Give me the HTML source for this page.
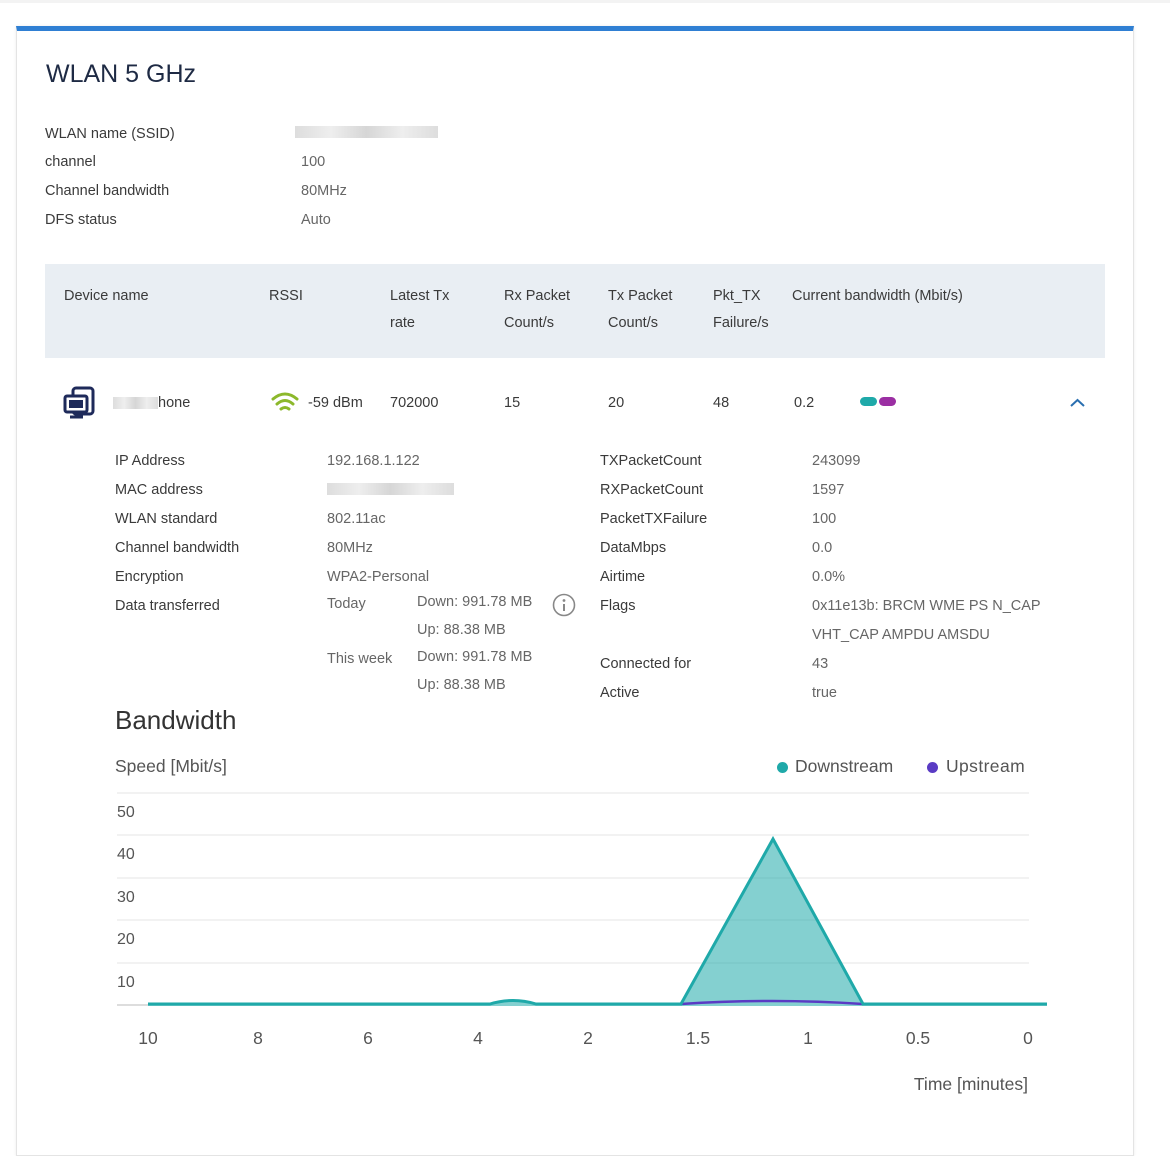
<!DOCTYPE html>
<html><head><meta charset="utf-8"><style>
*{margin:0;padding:0;box-sizing:border-box}
body{width:1170px;height:1124px;background:#fff;font-family:"Liberation Sans",sans-serif;color:#333;position:relative;overflow:hidden}
.a{position:absolute;white-space:nowrap}
.card{position:absolute;left:16px;top:26px;width:1118px;height:1130px;border:1px solid #e4e4e4;border-top:5px solid #2f7fd3;box-shadow:0 0 3px rgba(0,0,0,.08)}
.l{font-size:14.5px;color:#3a3a3a}
.v{font-size:14.5px;color:#666}
.blur{background:linear-gradient(90deg,#ddd,#eee,#d6d6d6,#eee,#ddd);height:12px}
</style></head><body>
<div class="a" style="left:0;top:0;width:1170px;height:3px;background:#f3f3f3"></div>
<div class="card"></div>
<div class="a" style="left:46px;top:60px;font-size:25px;color:#1e2a44">WLAN 5 GHz</div>
<div class="a l" style="left:45px;top:126px">WLAN name (SSID)</div>
<div class="a blur" style="left:295px;top:126px;width:143px"></div>
<div class="a l" style="left:45px;top:154px">channel</div><div class="a v" style="left:301px;top:154px">100</div>
<div class="a l" style="left:45px;top:183px">Channel bandwidth</div><div class="a v" style="left:301px;top:183px">80MHz</div>
<div class="a l" style="left:45px;top:212px">DFS status</div><div class="a v" style="left:301px;top:212px">Auto</div>

<div class="a" style="left:45px;top:264px;width:1060px;height:94px;background:#e9eef3"></div>
<div class="a l" style="left:64px;top:288px">Device name</div>
<div class="a l" style="left:269px;top:288px">RSSI</div>
<div class="a l" style="left:390px;top:283px;line-height:27px">Latest Tx<br>rate</div>
<div class="a l" style="left:504px;top:283px;line-height:27px">Rx Packet<br>Count/s</div>
<div class="a l" style="left:608px;top:283px;line-height:27px">Tx Packet<br>Count/s</div>
<div class="a l" style="left:713px;top:283px;line-height:27px">Pkt_TX<br>Failure/s</div>
<div class="a l" style="left:792px;top:288px">Current bandwidth (Mbit/s)</div>

<svg class="a" style="left:63px;top:386px" width="34" height="34" viewBox="0 0 34 34"><rect x="10" y="2" width="20" height="26" rx="3" fill="none" stroke="#1e2a5a" stroke-width="3"/><rect x="2" y="10" width="22" height="16" rx="2" fill="#fff" stroke="#1e2a5a" stroke-width="3"/><rect x="6" y="14" width="14" height="8" fill="#1e2a5a"/><path d="M13 26v4M7 31h13" stroke="#1e2a5a" stroke-width="3"/></svg>
<div class="a blur" style="left:113px;top:397px;width:45px"></div>
<div class="a l" style="left:158px;top:395px">hone</div>
<svg class="a" style="left:270px;top:391px" width="30" height="22" viewBox="0 0 30 22"><path d="M3 8Q15-2 27 8M7 13Q15 6 23 13M11 18Q15 15 19 18" fill="none" stroke="#8cb82b" stroke-width="3" stroke-linecap="round"/></svg>
<div class="a l" style="left:308px;top:395px">-59 dBm</div>
<div class="a l" style="left:390px;top:395px">702000</div>
<div class="a l" style="left:504px;top:395px">15</div>
<div class="a l" style="left:608px;top:395px">20</div>
<div class="a l" style="left:713px;top:395px">48</div>
<div class="a l" style="left:794px;top:395px">0.2</div>
<div class="a" style="left:860px;top:397px;width:17px;height:9px;border-radius:5px;background:#1fa9a9"></div>
<div class="a" style="left:879px;top:397px;width:17px;height:9px;border-radius:5px;background:#9b2fa3"></div>
<svg class="a" style="left:1069px;top:397px" width="17" height="11"><path d="M2 9L8.5 3L15 9" fill="none" stroke="#2a6fb0" stroke-width="2"/></svg>

<div class="a l" style="left:115px;top:447px;line-height:29px">IP Address<br>MAC address<br>WLAN standard<br>Channel bandwidth<br>Encryption<br>Data transferred</div>
<div class="a v" style="left:327px;top:447px;line-height:29px">192.168.1.122<br><br>802.11ac<br>80MHz<br>WPA2-Personal</div>
<div class="a blur" style="left:327px;top:483px;width:127px"></div>
<div class="a v" style="left:327px;top:596px">Today</div>
<div class="a v" style="left:327px;top:651px">This week</div>
<div class="a v" style="left:417px;top:589px;line-height:27.5px">Down: 991.78 MB<br>Up: 88.38 MB<br>Down: 991.78 MB<br>Up: 88.38 MB</div>
<svg class="a" style="left:552px;top:593px" width="24" height="24"><circle cx="12" cy="12" r="10.5" fill="none" stroke="#888" stroke-width="1.6"/><circle cx="12" cy="7.5" r="1.4" fill="#888"/><path d="M12 11v7" stroke="#888" stroke-width="2"/></svg>
<div class="a l" style="left:600px;top:447px;line-height:29px">TXPacketCount<br>RXPacketCount<br>PacketTXFailure<br>DataMbps<br>Airtime<br>Flags<br><br>Connected for<br>Active</div>
<div class="a v" style="left:812px;top:447px;line-height:29px">243099<br>1597<br>100<br>0.0<br>0.0%<br>0x11e13b: BRCM WME PS N_CAP<br>VHT_CAP AMPDU AMSDU<br>43<br>true</div>

<div class="a" style="left:115px;top:705px;font-size:26px;color:#333">Bandwidth</div>
<div class="a" style="left:115px;top:756px;font-size:17.5px;color:#555">Speed [Mbit/s]</div>
<div class="a" style="left:777px;top:762px;width:11px;height:11px;border-radius:50%;background:#1fa9a9"></div>
<div class="a" style="left:795px;top:756px;font-size:17.5px;color:#555">Downstream</div>
<div class="a" style="left:927px;top:762px;width:11px;height:11px;border-radius:50%;background:#5a3bc4"></div>
<div class="a" style="left:946px;top:756px;font-size:17.5px;color:#555;letter-spacing:0.4px">Upstream</div>

<svg class="a" style="left:0;top:0" width="1170" height="1124">
<g stroke="#eee" stroke-width="1.5"><path d="M117 793H1029M117 835H1029M117 878H1029M117 920H1029M117 963H1029"/></g>
<path d="M117 1005H148" stroke="#bbb"/>
<path d="M148 1004H490Q513 997 536 1004H681L773 839L863 1004H1047V1006H148Z" fill="#1fa9a9" fill-opacity=".55"/>
<path d="M681 1004Q773 998 863 1004" fill="none" stroke="#5a3bc4" stroke-width="2.5"/>
<path d="M148 1004H490Q513 997 536 1004H681L773 839L863 1004H1047" fill="none" stroke="#1fa9a9" stroke-width="3"/>
<g font-size="16" fill="#555" font-family="Liberation Sans,sans-serif"><text x="117" y="817">50</text><text x="117" y="859">40</text><text x="117" y="902">30</text><text x="117" y="944">20</text><text x="117" y="987">10</text></g>
<g font-size="17.5" fill="#555" font-family="Liberation Sans,sans-serif" text-anchor="middle"><text x="148" y="1044">10</text><text x="258" y="1044">8</text><text x="368" y="1044">6</text><text x="478" y="1044">4</text><text x="588" y="1044">2</text><text x="698" y="1044">1.5</text><text x="808" y="1044">1</text><text x="918" y="1044">0.5</text><text x="1028" y="1044">0</text><text x="1028" y="1090" text-anchor="end">Time [minutes]</text></g>
</svg>
</body></html>
